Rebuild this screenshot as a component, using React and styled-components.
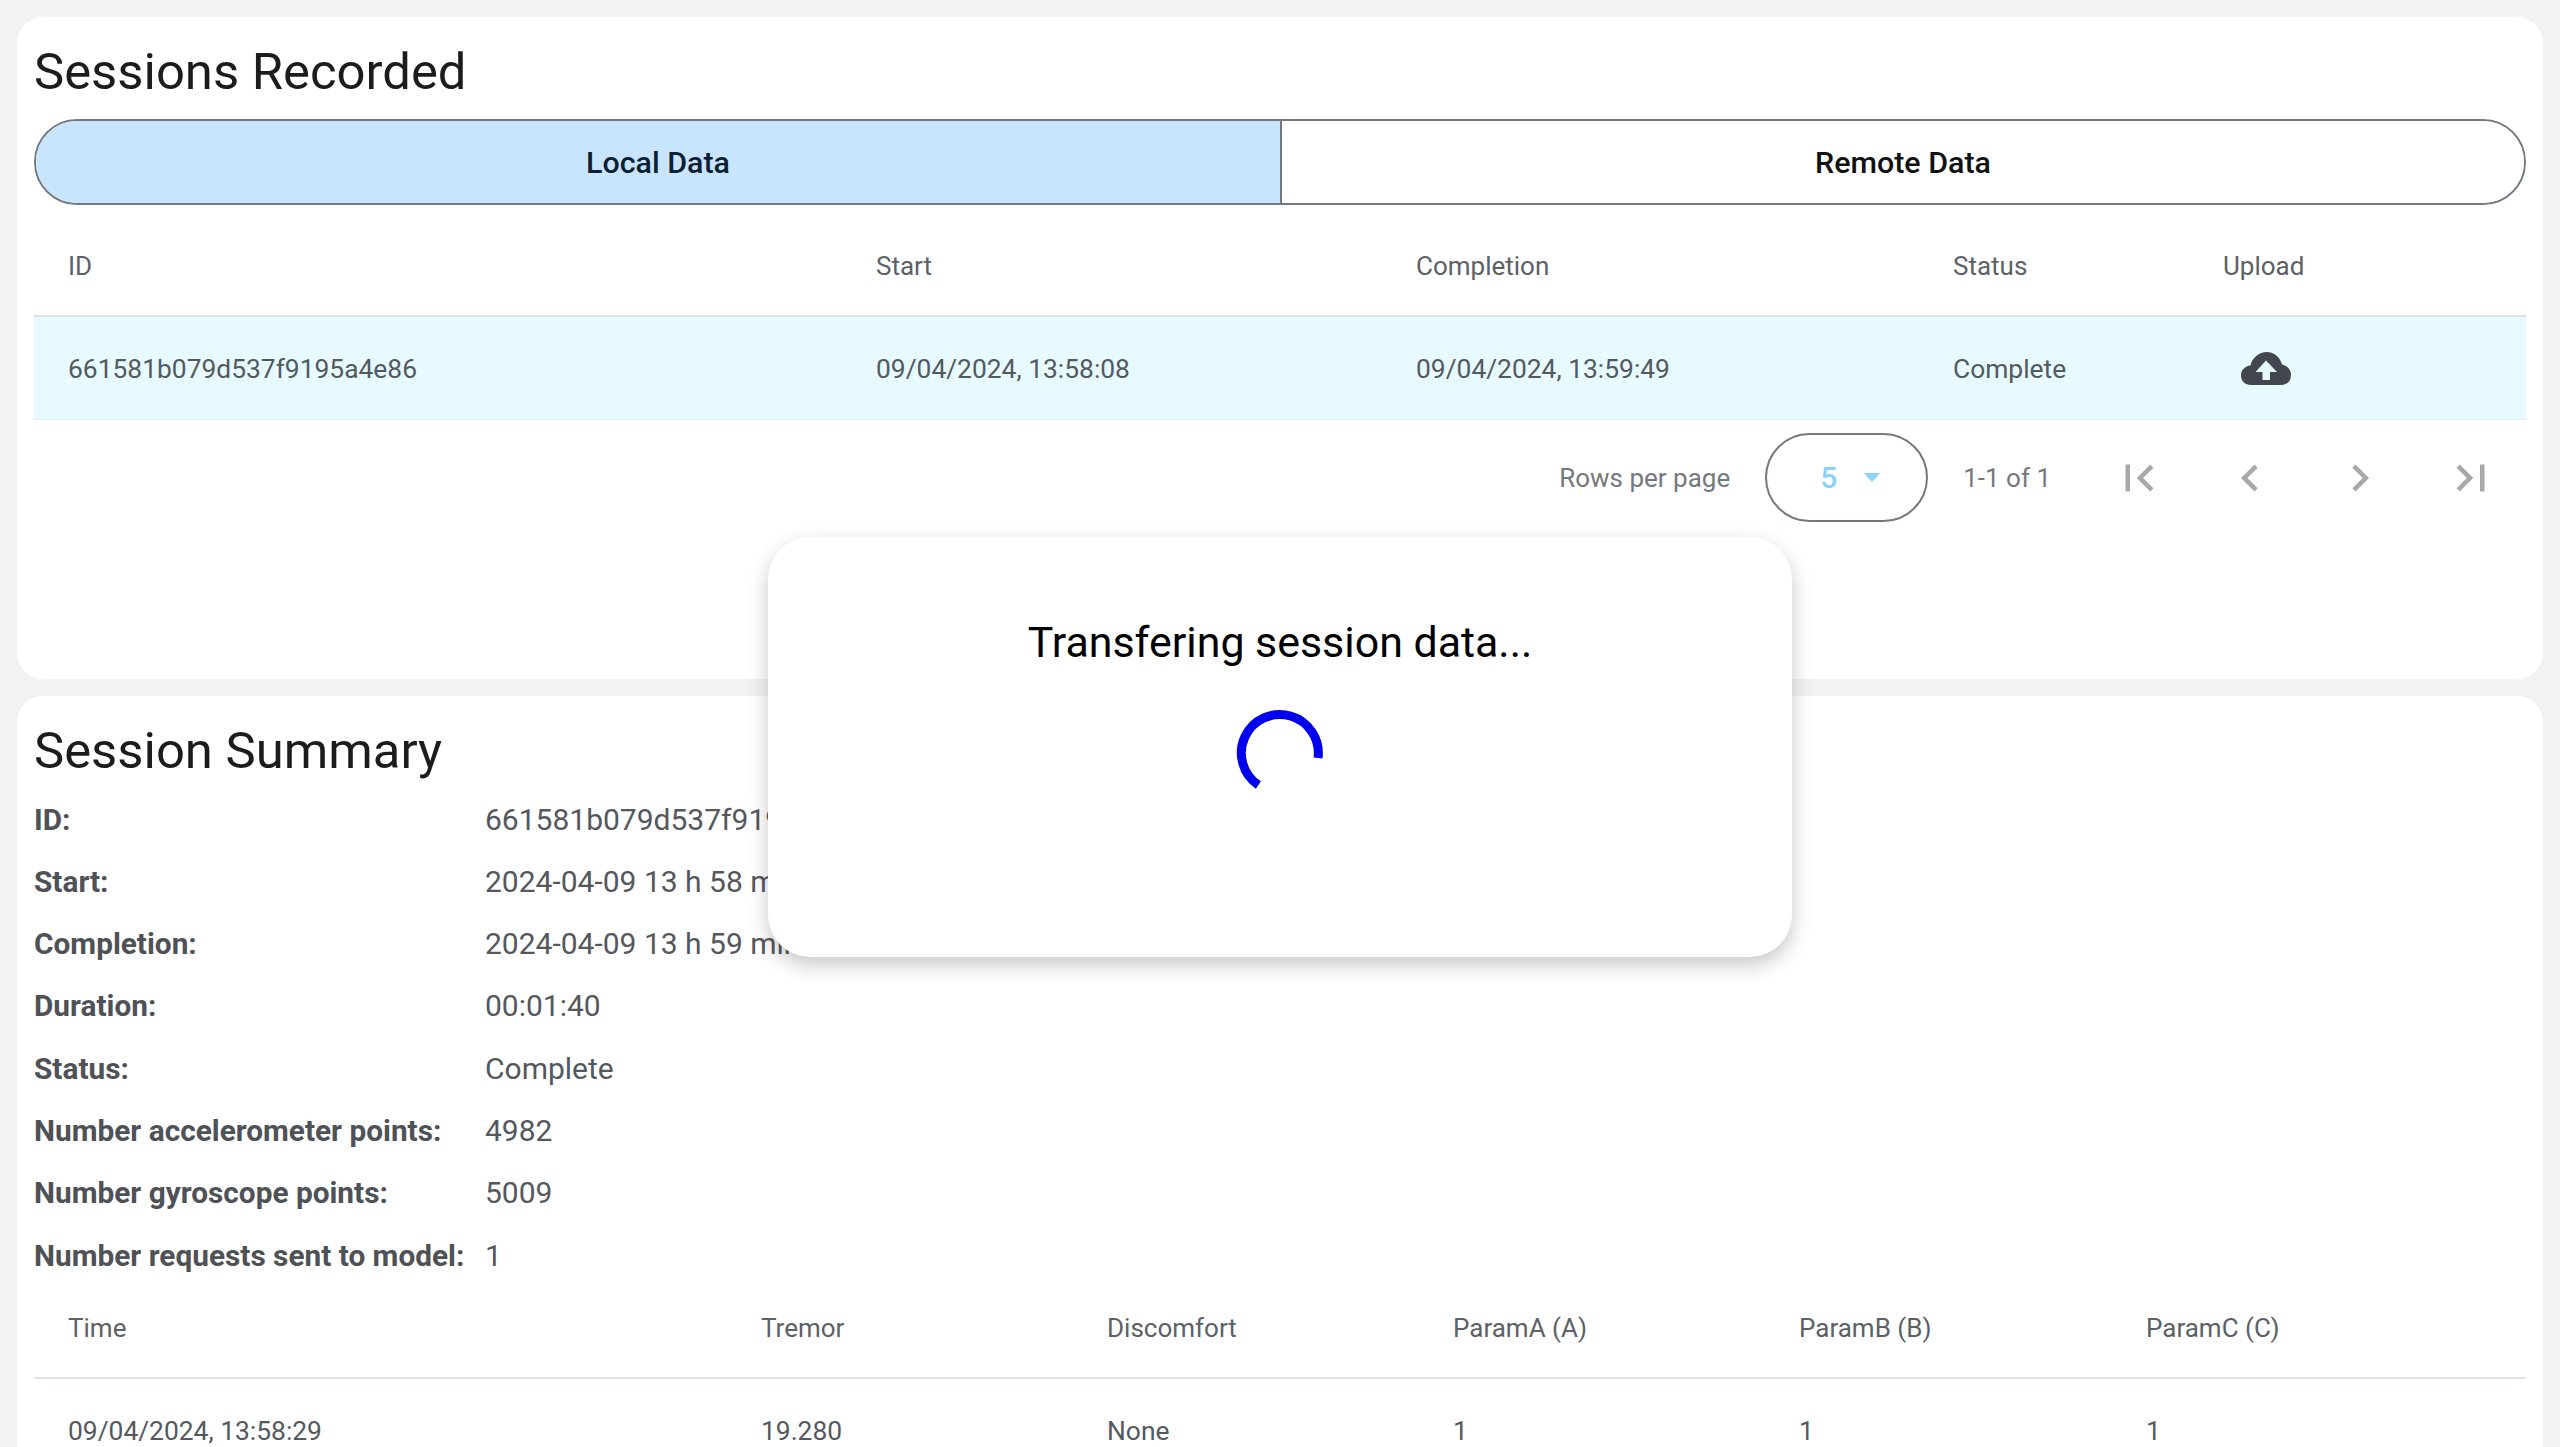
import styled, { createGlobalStyle } from "styled-components"

const sessionColumns = [808, 540, 537, 270, 337]
const summaryColumns = [693, 346, 346, 346, 347, 414]

const summaryItems = [
    ["ID:", "661581b079d537f9195a4e86"],
    ["Start:", "2024-04-09 13 h 58 min 08 s"],
    ["Completion:", "2024-04-09 13 h 59 min 49 s"],
    ["Duration:", "00:01:40"],
    ["Status:", "Complete"],
    ["Number accelerometer points:", "4982"],
    ["Number gyroscope points:", "5009"],
    ["Number requests sent to model:", "1"],
]

const pageIcons = [
    "M18.41 16.59L13.82 12l4.59-4.59L17 6l-6 6 6 6zM6 6h2v12H6z",
    "M15.41 16.59L10.83 12l4.58-4.59L14 6l-6 6 6 6 1.41-1.41z",
    "M8.59 16.59L13.17 12 8.59 7.41 10 6l6 6-6 6-1.41-1.41z",
    "M5.59 7.41L10.18 12l-4.59 4.59L7 18l6-6-6-6zM16 6h2v12h-2z",
]

export default function App() {
    return (
        <Page>
            <GlobalStyle />
            <Card $height={662}>
                <Title>Sessions Recorded</Title>
                <Toggle>
                    <ToggleButton $active>Local Data</ToggleButton>
                    <ToggleButton>Remote Data</ToggleButton>
                </Toggle>
                <Table $top={10}>
                    <colgroup>
                        {sessionColumns.map((w, i) => <col key={i} width={w} />)}
                    </colgroup>
                    <thead>
                        <tr>
                            <HeadCell>ID</HeadCell>
                            <HeadCell>Start</HeadCell>
                            <HeadCell>Completion</HeadCell>
                            <HeadCell>Status</HeadCell>
                            <HeadCell>Upload</HeadCell>
                        </tr>
                    </thead>
                    <tbody>
                        <SelectedRow>
                            <BodyCell>661581b079d537f9195a4e86</BodyCell>
                            <BodyCell>09/04/2024, 13:58:08</BodyCell>
                            <BodyCell>09/04/2024, 13:59:49</BodyCell>
                            <BodyCell>Complete</BodyCell>
                            <BodyCell>
                                <UploadIcon viewBox="0 0 50 33">
                                    <path
                                        fillRule="evenodd"
                                        d="M10 33C4 33 0 29 0 23.5 0 18 4 14 9.5 13.5 11 6 18 0 26 0c7 0 13 5 15 12.5C46.5 13.5 50 18 50 23c0 6-4 10-10 10zM25 8.5L14.500 20H21.500V28H29V20H36z"
                                    />
                                </UploadIcon>
                            </BodyCell>
                        </SelectedRow>
                    </tbody>
                </Table>
                <Pagination>
                    <PageText>Rows per page</PageText>
                    <RowsSelect>
                        <SelectValue>5</SelectValue>
                        <SelectArrow />
                    </RowsSelect>
                    <PageText>1-1 of 1</PageText>
                    <PageButtons>
                        {pageIcons.map((d) => (
                            <PageButton key={d}>
                                <svg viewBox="0 0 24 24" width="54" height="54" fill="currentColor">
                                    <path d={d} />
                                </svg>
                            </PageButton>
                        ))}
                    </PageButtons>
                </Pagination>
            </Card>

            <Card>
                <Title>Session Summary</Title>
                <SummaryGrid>
                    {summaryItems.map(([label, value]) => (
                        <SummaryRow key={label}>
                            <SummaryLabel>{label}</SummaryLabel>
                            <SummaryValue>{value}</SummaryValue>
                        </SummaryRow>
                    ))}
                </SummaryGrid>
                <Table $top={4}>
                    <colgroup>
                        {summaryColumns.map((w, i) => <col key={i} width={w} />)}
                    </colgroup>
                    <thead>
                        <tr>
                            <HeadCell>Time</HeadCell>
                            <HeadCell>Tremor</HeadCell>
                            <HeadCell>Discomfort</HeadCell>
                            <HeadCell>ParamA (A)</HeadCell>
                            <HeadCell>ParamB (B)</HeadCell>
                            <HeadCell>ParamC (C)</HeadCell>
                        </tr>
                    </thead>
                    <tbody>
                        <tr>
                            <BodyCell>09/04/2024, 13:58:29</BodyCell>
                            <BodyCell>19.280</BodyCell>
                            <BodyCell>None</BodyCell>
                            <BodyCell>1</BodyCell>
                            <BodyCell>1</BodyCell>
                            <BodyCell>1</BodyCell>
                        </tr>
                    </tbody>
                </Table>
            </Card>

            <Modal>
                <ModalTitle>Transfering session data...</ModalTitle>
                <svg viewBox="0 0 100 100" width="100" height="100">
                    <path
                        d="M88 56A38.500 38.500 0 1 0 28.400 83"
                        fill="none"
                        stroke="#0000ee"
                        strokeWidth="9"
                    />
                </svg>
            </Modal>
        </Page>
    )
}

const GlobalStyle = createGlobalStyle`
    html, body {
        margin: 0;
        height: 100%;
        overflow: hidden;
        background-color: #f2f2f2;
    }

    * {
        box-sizing: border-box;
    }
`

const Page = styled.div`
    position: relative;
    display: flex;
    flex-direction: column;
    gap: 17px;
    height: 100vh;
    padding: 17px 17px 0;
    overflow: hidden;
    font-family: Roboto, "Liberation Sans", sans-serif;
    background-color: #f2f2f2;
`

const Card = styled.section`
    flex: ${(p) => (p.$height ? `0 0 ${p.$height}px` : "1 0 auto")};
    padding: 17px;
    border-radius: 26px;
    background-color: #fff;
`

const Title = styled.h2`
    margin: 0 0 13px;
    height: 72px;
    font-size: 50.800px;
    font-weight: 400;
    line-height: 75px;
    color: #1c1c1c;
`

const Toggle = styled.div`
    display: flex;
    height: 86px;
    border: 2px solid #737980;
    border-radius: 43px;
    overflow: hidden;
`

const ToggleButton = styled.div`
    flex: ${(p) => (p.$active ? "0 0 1246px" : "1")};
    display: flex;
    justify-content: center;
    align-items: center;
    font-size: 30.400px;
    font-weight: 500;
    color: ${(p) => (p.$active ? "#0b1f33" : "#111")};
    background-color: ${(p) => (p.$active ? "#c9e5fe" : "#fff")};
    border-right: ${(p) => (p.$active ? "2px solid #737980" : "none")};
`

const Table = styled.table`
    width: 2492px;
    margin-top: ${(p) => p.$top}px;
    border-collapse: collapse;
    table-layout: fixed;
`

const HeadCell = styled.th`
    height: 101px;
    padding: 1px 34px 0;
    border-bottom: 2px solid #dfe3e8;
    font-size: 26px;
    font-weight: 400;
    text-align: left;
    color: #5c6166;
`

const BodyCell = styled.td`
    height: 103px;
    padding: 2px 34px 0;
    border-bottom: 1px solid #e4eef2;
    font-size: 26.400px;
    color: #54595e;
`

const SelectedRow = styled.tr`
    background-color: #e6faff;
`

const UploadIcon = styled.svg`
    display: block;
    width: 50px;
    height: 33px;
    margin-left: 18px;
    fill: #41464f;
`

const Pagination = styled.div`
    display: flex;
    justify-content: flex-end;
    align-items: center;
    gap: 35px;
    height: 90px;
    margin-top: 13px;
`

const PageText = styled.span`
    font-size: 26px;
    color: #74797e;
`

const RowsSelect = styled.div`
    display: flex;
    align-items: center;
    width: 163px;
    height: 89px;
    padding-left: 53px;
    border: 2px solid #74797e;
    border-radius: 45px;
`

const SelectValue = styled.span`
    font-size: 30px;
    font-weight: 500;
    color: #8ad3f8;
`

const SelectArrow = styled.span`
    width: 0;
    height: 0;
    margin-left: 27px;
    border-left: 8px solid transparent;
    border-right: 8px solid transparent;
    border-top: 9px solid #8ad3f8;
`

const PageButtons = styled.div`
    display: flex;
    margin-left: -2px;
`

const PageButton = styled.div`
    display: flex;
    justify-content: center;
    align-items: center;
    width: 110.500px;
    color: #a8a8a8;
`

const SummaryGrid = styled.div`
    display: flex;
    flex-direction: column;
    gap: 26.300px;
    margin-top: 16px;
`

const SummaryRow = styled.div`
    display: grid;
    grid-template-columns: 451px 1fr;
    align-items: center;
    height: 36px;
`

const SummaryLabel = styled.span`
    font-size: 29.800px;
    font-weight: 700;
    color: #4e5257;
`

const SummaryValue = styled.span`
    font-size: 30px;
    color: #54585d;
`

const Modal = styled.div`
    position: absolute;
    top: 537px;
    left: 768px;
    display: flex;
    flex-direction: column;
    align-items: center;
    width: 1024px;
    height: 420px;
    padding-top: 72px;
    border-radius: 42px;
    background-color: #fff;
    box-shadow: 0 8px 20px rgba(0, 0, 0, 0.22);
`

const ModalTitle = styled.div`
    height: 66px;
    margin-bottom: 27px;
    font-size: 42.900px;
    line-height: 66px;
    color: #000;
`
